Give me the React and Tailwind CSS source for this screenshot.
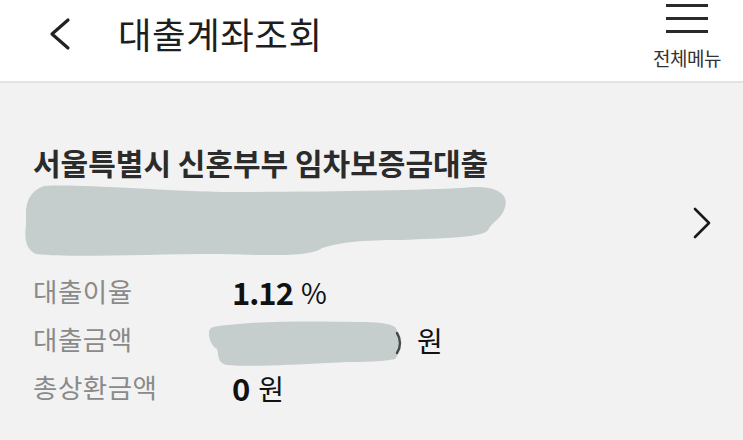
import React from 'react';

const font = { fontFamily: '"Noto Sans CJK KR", "Noto Sans", sans-serif' };

function Scribble({ w, h, d, children }) {
    return (
        <svg width={w} height={h} viewBox={`0 0 ${w} ${h}`} className="block">
            <path d={d} fill="#c6cecd" />
            {children}
        </svg>
    );
}

const accountBlob =
    'M4 30 C4 18 10 8 22 4 C60 2 120 8 200 10 C300 10 400 8 440 6 C470 2 490 10 482 28 C478 38 470 40 466 48 C460 56 420 56 380 58 C340 58 320 60 300 66 C290 74 260 74 200 72 C120 72 50 76 14 72 C4 68 2 56 4 44 Z';

const amountBlob =
    'M6 8 C40 2 100 2 150 3 C170 3 182 4 188 8 C194 16 194 34 188 40 C170 44 150 42 120 44 C80 46 40 48 20 46 C10 44 12 36 10 30 C4 26 2 20 2 14 C2 10 4 9 6 8 Z';

export default function App() {
    return (
        <div className="w-[743px] h-[440px] overflow-hidden bg-[#f2f2f2]" style={font}>
            <header className="h-[83px] bg-white border-b-2 border-[#e3e3e3] flex items-start justify-between">
                <div className="flex items-center pt-[16px]">
                    <svg width="24" height="34" viewBox="0 0 24 34" className="ml-[47px]">
                        <path d="M21 3 L5 17 L21 31" fill="none" stroke="#222" strokeWidth="3.2" strokeLinecap="round" strokeLinejoin="round" />
                    </svg>
                    <h1 className="ml-[47px] text-[36.5px] tracking-[0.5px] text-[#1e1e1e] leading-none">대출계좌조회</h1>
                </div>
                <div className="flex flex-col items-center mr-[22px]">
                    <div className="flex flex-col gap-[10px] pt-[4px]">
                        <span className="block w-[42px] h-[3px] bg-[#2a2a2a]" />
                        <span className="block w-[42px] h-[3px] bg-[#2a2a2a]" />
                        <span className="block w-[42px] h-[3px] bg-[#2a2a2a]" />
                    </div>
                    <span className="mt-[15px] text-[19px] leading-none text-[#333] tracking-[-0.5px]">전체메뉴</span>
                </div>
            </header>

            <section className="pl-[33px] pt-[64px]">
                <h2 className="text-[30px] font-bold text-[#2b2b2b] leading-none">서울특별시 신혼부부 임차보증금대출</h2>
                <div className="flex items-center justify-between mt-[5px] -ml-[11px] pr-[31px]">
                    <Scribble w={486} h={76} d={accountBlob} />
                    <svg width="20" height="34" viewBox="0 0 20 34" className="mt-[6px]">
                        <path d="M3 3 L17 17 L3 31" fill="none" stroke="#1a1a1a" strokeWidth="2.6" strokeLinecap="round" strokeLinejoin="round" />
                    </svg>
                </div>

                <div className="mt-[16px] flex flex-col gap-[13px]">
                    <div className="flex items-center h-[35px]">
                        <span className="w-[199px] text-[26.5px] tracking-[0.5px] text-[#8a8a8a] leading-none">대출이율</span>
                        <span className="text-[31px] font-bold text-[#111] leading-none tracking-[-1px]">1.12</span>
                        <span className="ml-[8px] text-[28px] text-[#111] leading-none">%</span>
                    </div>
                    <div className="flex items-center h-[35px]">
                        <span className="w-[174px] text-[26.5px] tracking-[0.5px] text-[#8a8a8a] leading-none">대출금액</span>
                        <div className="mt-[6px]">
                            <Scribble w={198} h={48} d={amountBlob}>
                                <path d="M190 14 C194 20 194 28 190 34" fill="none" stroke="#222" strokeOpacity="0.8" strokeWidth="2.4" strokeLinecap="round" />
                            </Scribble>
                        </div>
                        <span className="ml-[12px] text-[28px] text-[#111] leading-none">원</span>
                    </div>
                    <div className="flex items-center h-[35px]">
                        <span className="w-[199px] text-[26.5px] tracking-[0.5px] text-[#8a8a8a] leading-none">총상환금액</span>
                        <span className="text-[31px] font-bold text-[#111] leading-none">0</span>
                        <span className="ml-[8px] text-[28px] text-[#111] leading-none">원</span>
                    </div>
                </div>
            </section>
        </div>
    );
}
